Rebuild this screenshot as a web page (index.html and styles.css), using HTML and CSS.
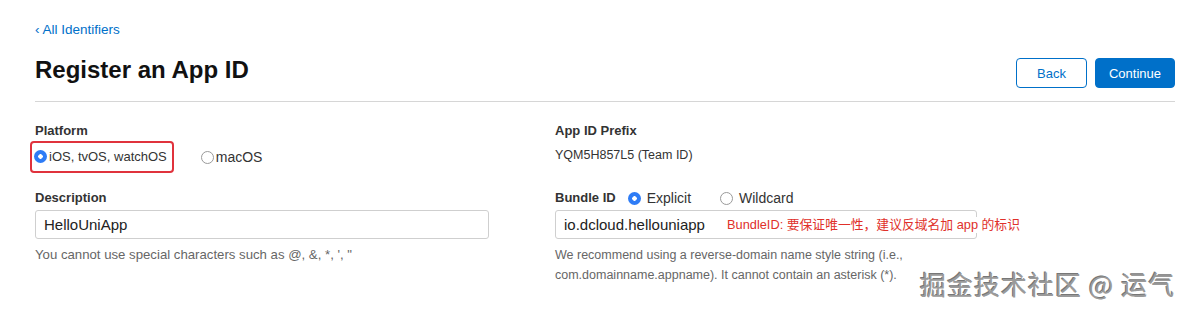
FILE: index.html
```html
<!DOCTYPE html>
<html lang="en">
<head>
  <meta charset="UTF-8">
  <title>Register an App ID</title>
  <link rel="stylesheet" href="styles.css">
</head>
<body>
  <div class="page">
    <a class="back-link" href="#">&lsaquo; All Identifiers</a>

    <div class="page-head">
      <h1>Register an App ID</h1>
      <div class="actions">
        <button class="btn btn-outline">Back</button>
        <button class="btn btn-primary">Continue</button>
      </div>
    </div>

    <div class="form">
      <div class="field">
        <div class="label">Platform</div>
        <div class="radio-row">
          <label class="radio highlight"><span class="dot checked"></span>iOS, tvOS, watchOS</label>
          <label class="radio"><span class="dot"></span>macOS</label>
        </div>
      </div>

      <div class="field">
        <div class="label">App ID Prefix</div>
        <div class="value">YQM5H857L5 (Team ID)</div>
      </div>

      <div class="field">
        <div class="label">Description</div>
        <input class="text-input wide" type="text" value="HelloUniApp">
        <p class="hint left-hint">You cannot use special characters such as @, &amp;, *, ', "</p>
      </div>

      <div class="field">
        <div class="label-row">
          <span class="label">Bundle ID</span>
          <label class="radio spaced"><span class="dot checked"></span>Explicit</label>
          <label class="radio spaced"><span class="dot"></span>Wildcard</label>
        </div>
        <div class="input-wrap">
          <input class="text-input narrow" type="text" value="io.dcloud.hellouniapp">
          <span class="note">BundleID: 要保证唯一性，建议反域名加 app 的标识</span>
        </div>
        <p class="hint">We recommend using a reverse-domain name style string (i.e.,<br>com.domainname.appname). It cannot contain an asterisk (*).</p>
      </div>
    </div>
  </div>

  <div class="watermark">掘金技术社区 @ 运气</div>
</body>
</html>
```

FILE: styles.css
```css
body {
  margin: 0;
  font-family: "Liberation Sans", Arial, "Noto Sans CJK SC", sans-serif;
  background-color: #fff;
  color: #333;
}

.page {
  width: 1140px;
  padding: 22px 0 0 35px;
}

.back-link {
  display: block;
  color: #0070c9;
  text-decoration: none;
  font-size: 13.5px;
  line-height: 16px;
}

.page-head {
  display: flex;
  justify-content: space-between;
  align-items: center;
  padding: 13px 0 13px;
  border-bottom: 1px solid #d6d6d6;
}

.page-head h1 {
  margin: 0;
  font-size: 24px;
  font-weight: bold;
  color: #111;
  line-height: 26px;
}

.actions {
  display: flex;
  gap: 8px;
  margin-top: 7px;
}

.btn {
  font-family: inherit;
  font-size: 13px;
  height: 30px;
  border-radius: 4px;
  cursor: pointer;
}

.btn-outline {
  width: 71px;
  background-color: #fff;
  color: #0070c9;
  border: 1px solid #0070c9;
}

.btn-primary {
  width: 80px;
  background-color: #0070c9;
  color: #fff;
  border: 1px solid #0070c9;
}

.form {
  display: grid;
  grid-template-columns: 520px 1fr;
  row-gap: 17px;
  padding-top: 21px;
}

.label {
  font-size: 13px;
  font-weight: bold;
  color: #333;
  line-height: 16px;
}

.value {
  font-size: 12.5px;
  color: #333;
  margin-top: 8px;
  line-height: 16px;
}

.radio-row {
  display: flex;
  align-items: center;
  gap: 27px;
  margin-top: 2px;
}

.radio {
  display: flex;
  align-items: center;
  font-size: 13px;
  color: #333;
  gap: 2px;
}

.radio.highlight {
  border: 2px solid #e0323c;
  border-radius: 4px;
  padding: 6px 5px 7px 2px;
  margin-left: -5px;
}

.radio-row .radio:not(.highlight) {
  font-size: 14px;
}

.radio.spaced {
  gap: 6px;
  font-size: 14px;
}

.dot {
  display: inline-block;
  width: 11px;
  height: 11px;
  border: 1px solid #9a9a9a;
  border-radius: 50%;
  background-color: #fff;
}

.dot.checked {
  width: 13px;
  height: 13px;
  border: none;
  background: radial-gradient(circle, #fff 0 2px, #2e7cf6 2.5px);
}

.label-row {
  display: flex;
  align-items: center;
  gap: 12px;
}

.label-row .radio + .radio {
  margin-left: 17px;
}

.text-input {
  display: block;
  box-sizing: border-box;
  height: 29px;
  margin-top: 4px;
  padding: 0 8px;
  font-family: inherit;
  font-size: 15px;
  color: #222;
  border: 1px solid #cfcfcf;
  border-radius: 3px;
}

.text-input.wide {
  width: 454px;
}

.text-input.narrow {
  width: 422px;
}

.input-wrap {
  position: relative;
}

.note {
  position: absolute;
  left: 172px;
  top: 7px;
  font-size: 12.8px;
  color: #e0302a;
  background-color: #fff;
  line-height: 16px;
}

.hint {
  margin: 6px 0 0;
  font-size: 12.5px;
  color: #666;
  line-height: 20px;
}

.hint.left-hint {
  font-size: 13.2px;
}

.watermark {
  position: absolute;
  left: 920px;
  top: 268px;
  font-family: "Noto Sans CJK SC", sans-serif;
  font-size: 26px;
  line-height: 32px;
  color: #9a9a9a;
  text-shadow: 1px 1px 0 #fff, -1px -1px 0 #777;
  letter-spacing: 1px;
}
```
